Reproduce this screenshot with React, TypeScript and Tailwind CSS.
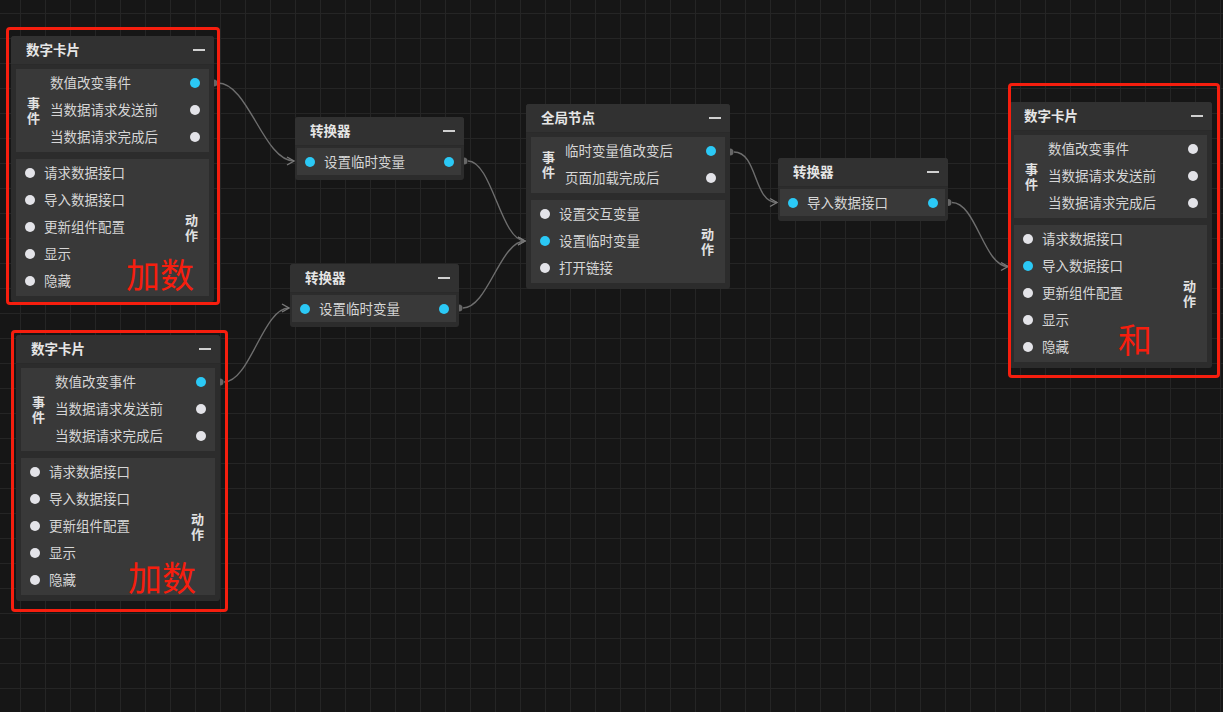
import React from "react";

type Row = { text: string; blue?: boolean };

function Dot({ blue }: { blue?: boolean }) {
  return (
    <span
      className={
        blue
          ? "block w-[10px] h-[10px] rounded-full bg-[#2bc9f6] shrink-0"
          : "block w-[10px] h-[10px] rounded-full bg-[#e3e3e8] shrink-0"
      }
    />
  );
}

function Header({ title }: { title: string }) {
  return (
    <div className="h-[29px] flex items-center justify-between pl-[15px] pr-[9px] bg-[#313131] rounded-t-[3px] border-b border-[#2a2a2a]">
      <span className="text-[13.5px] font-bold text-[#e6e6e6] leading-none">{title}</span>
      <span className="block w-[12px] h-[2px] bg-[#d0d0d0]" />
    </div>
  );
}

function VLabel({ text, className }: { text: string; className: string }) {
  return (
    <div className={className}>
      <span className="block w-[14px] break-all text-[13px] font-bold leading-[15px] text-[#e2e2e2]">{text}</span>
    </div>
  );
}

function Events({ rows }: { rows: Row[] }) {
  return (
    <div className="bg-[#393939] flex pb-[2px]">
      <VLabel text="事件" className="w-[14px] ml-[11px] flex flex-col justify-center" />
      <div className="flex-1 ml-[9px] pr-[9px]">
        {rows.map((r) => (
          <div key={r.text} className="h-[27px] flex items-center justify-between">
            <span className="text-[13.5px] text-[#d6d6d6] leading-none">{r.text}</span>
            <Dot blue={r.blue} />
          </div>
        ))}
      </div>
    </div>
  );
}

function Actions({ rows }: { rows: Row[] }) {
  return (
    <div className="bg-[#393939] flex pb-[2px]">
      <div className="flex-1 pl-[9px]">
        {rows.map((r) => (
          <div key={r.text} className="h-[27px] flex items-center gap-[9px]">
            <Dot blue={r.blue} />
            <span className="text-[13.5px] text-[#d6d6d6] leading-none">{r.text}</span>
          </div>
        ))}
      </div>
      <VLabel text="动作" className="pr-[10px] flex flex-col justify-center" />
    </div>
  );
}

function CardNode({
  className,
  title,
  events,
  actions,
}: {
  className: string;
  title: string;
  events: Row[];
  actions: Row[];
}) {
  return (
    <div className={className}>
      <Header title={title} />
      <div className="px-[5px] pt-[4px] pb-[6px] flex flex-col gap-[7px]">
        <Events rows={events} />
        <Actions rows={actions} />
      </div>
    </div>
  );
}

function Converter({ className, text }: { className: string; text: string }) {
  return (
    <div className={className}>
      <Header title="转换器" />
      <div className="pl-[2px] pr-[3px] pt-[2px] pb-[5px]">
        <div className="bg-[#393939] h-[27px] flex items-center justify-between pl-[8px] pr-[7px]">
          <div className="flex items-center gap-[9px]">
            <Dot blue />
            <span className="text-[13.5px] text-[#d6d6d6] leading-none">{text}</span>
          </div>
          <Dot blue />
        </div>
      </div>
    </div>
  );
}

const cardEvents: Row[] = [
  { text: "数值改变事件", blue: true },
  { text: "当数据请求发送前" },
  { text: "当数据请求完成后" },
];
const cardActions: Row[] = [
  { text: "请求数据接口" },
  { text: "导入数据接口" },
  { text: "更新组件配置" },
  { text: "显示" },
  { text: "隐藏" },
];

const edges: [number, number, number, number][] = [
  [214, 83, 295, 161],
  [220, 382, 290, 308],
  [464, 161, 526, 241],
  [459, 308, 526, 241],
  [730, 152, 778, 202.5],
  [948, 202.5, 1009, 266.5],
];

function Edges() {
  return (
    <svg className="absolute inset-0 pointer-events-none" width="1223" height="712">
      {edges.map(([x1, y1, x2, y2], i) => {
        const sx = x1 + 4;
        const ex = x2 - 1;
        const k = Math.max(24, (ex - sx) * 0.4);
        return (
          <g key={i}>
            <path
              d={`M ${sx} ${y1} C ${sx + k} ${y1}, ${ex - k} ${y2}, ${ex} ${y2}`}
              fill="none"
              stroke="#6e6e6e"
              strokeWidth="1.4"
            />
            <path
              d={`M ${ex - 7} ${y2 - 4} L ${ex} ${y2} L ${ex - 7} ${y2 + 4}`}
              fill="none"
              stroke="#7a7a7a"
              strokeWidth="1.4"
            />
            <path
              d={`M ${x1} ${y1 - 3.5} A 3.5 3.5 0 0 1 ${x1} ${y1 + 3.5} Z`}
              fill="#666666"
            />
          </g>
        );
      })}
    </svg>
  );
}

export default function App() {
  return (
    <div className="relative w-[1223px] h-[712px] overflow-hidden bg-[#161616] bg-[linear-gradient(to_right,#252525_1px,transparent_1px),linear-gradient(to_bottom,#252525_1px,transparent_1px)] bg-[size:25px_25px] bg-[position:20px_13px] font-['Noto_Sans_CJK_SC','Microsoft_YaHei',sans-serif]">
      <Edges />

      <CardNode
        className="absolute left-[11px] top-[36px] w-[203px] bg-[#2c2c2c] rounded-[3px]"
        title="数字卡片"
        events={cardEvents}
        actions={cardActions}
      />
      <CardNode
        className="absolute left-[16px] top-[335px] w-[204px] bg-[#2c2c2c] rounded-[3px]"
        title="数字卡片"
        events={cardEvents}
        actions={cardActions}
      />
      <Converter className="absolute left-[295px] top-[117px] w-[169px] bg-[#2c2c2c] rounded-[3px]" text="设置临时变量" />
      <Converter className="absolute left-[290px] top-[264px] w-[169px] bg-[#2c2c2c] rounded-[3px]" text="设置临时变量" />
      <CardNode
        className="absolute left-[526px] top-[104px] w-[204px] bg-[#2c2c2c] rounded-[3px]"
        title="全局节点"
        events={[{ text: "临时变量值改变后", blue: true }, { text: "页面加载完成后" }]}
        actions={[{ text: "设置交互变量" }, { text: "设置临时变量", blue: true }, { text: "打开链接" }]}
      />
      <Converter className="absolute left-[778px] top-[158px] w-[170px] bg-[#2c2c2c] rounded-[3px]" text="导入数据接口" />
      <CardNode
        className="absolute left-[1009px] top-[102px] w-[203px] bg-[#2c2c2c] rounded-[3px]"
        title="数字卡片"
        events={[{ text: "数值改变事件" }, { text: "当数据请求发送前" }, { text: "当数据请求完成后" }]}
        actions={[
          { text: "请求数据接口" },
          { text: "导入数据接口", blue: true },
          { text: "更新组件配置" },
          { text: "显示" },
          { text: "隐藏" },
        ]}
      />

      <div className="absolute left-[6px] top-[27px] w-[214px] h-[278px] border-[3px] border-[#f61e0e] rounded-[4px]" />
      <div className="absolute left-[11px] top-[330px] w-[217px] h-[282px] border-[3px] border-[#f61e0e] rounded-[4px]" />
      <div className="absolute left-[1008px] top-[83px] w-[212px] h-[295px] border-[3px] border-[#f61e0e] rounded-[4px]" />

      <span className="absolute left-[126px] top-[254px] text-[34px] leading-[40px] text-[#f61e0e]">加数</span>
      <span className="absolute left-[128px] top-[557px] text-[34px] leading-[40px] text-[#f61e0e]">加数</span>
      <span className="absolute left-[1118px] top-[319px] text-[34px] leading-[40px] text-[#f61e0e]">和</span>
    </div>
  );
}
